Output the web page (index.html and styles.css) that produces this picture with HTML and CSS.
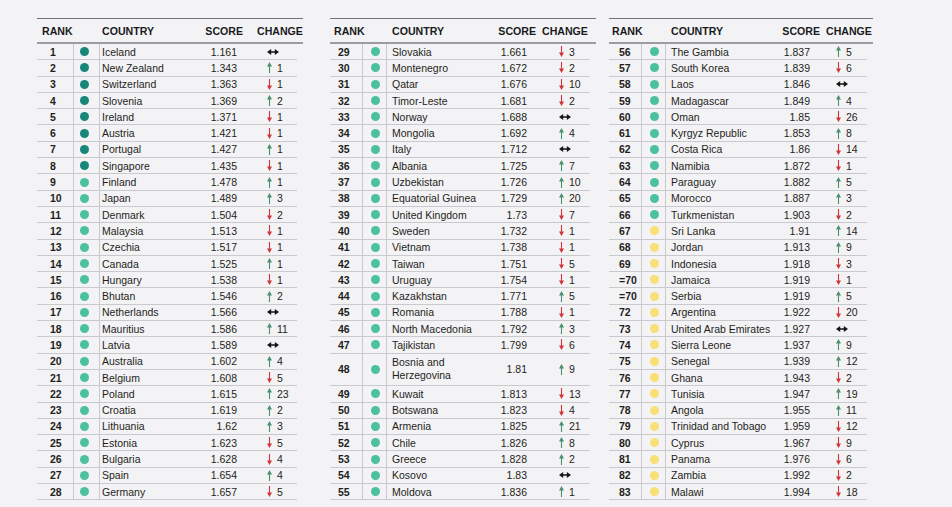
FILE: index.html
```html
<!DOCTYPE html>
<html lang="en">
<head>
<meta charset="utf-8">
<title>Global Peace Index Ranking</title>
<link rel="stylesheet" href="styles.css">
</head>
<body>
<svg class="defs" width="0" height="0" aria-hidden="true">
  <symbol id="up" viewBox="0 0 5 11"><path d="M2.5 0 L5 4.4 L3.05 4.4 L3.05 11 L1.95 11 L1.95 4.4 L0 4.4 Z" fill="#4a8f6e"/></symbol>
  <symbol id="dn" viewBox="0 0 5 11"><path d="M2.5 11 L5 6.6 L3.05 6.6 L3.05 0 L1.95 0 L1.95 6.6 L0 6.6 Z" fill="#d23539"/></symbol>
  <symbol id="eq" viewBox="0 0 12 6"><path d="M0 3 L4.2 0 L4.2 2.2 L7.8 2.2 L7.8 0 L12 3 L7.8 6 L7.8 3.8 L4.2 3.8 L4.2 6 Z" fill="#141414"/></symbol>
</svg>
<div class="page">
  <section class="panel p1">
    <div class="head"><span class="h-rank">RANK</span><span class="h-country">COUNTRY</span><span class="h-score">SCORE</span><span class="h-change">CHANGE</span></div>
    <div class="row"><span class="rank">1</span><span class="dotc"><i class="dot a"></i></span><span class="country">Iceland</span><span class="score">1.161</span><span class="chg"><svg class="eq"><use href="#eq"/></svg></span></div>
    <div class="row"><span class="rank">2</span><span class="dotc"><i class="dot a"></i></span><span class="country">New Zealand</span><span class="score">1.343</span><span class="chg"><svg class="ar"><use href="#up"/></svg>1</span></div>
    <div class="row"><span class="rank">3</span><span class="dotc"><i class="dot a"></i></span><span class="country">Switzerland</span><span class="score">1.363</span><span class="chg"><svg class="ar"><use href="#dn"/></svg>1</span></div>
    <div class="row"><span class="rank">4</span><span class="dotc"><i class="dot a"></i></span><span class="country">Slovenia</span><span class="score">1.369</span><span class="chg"><svg class="ar"><use href="#up"/></svg>2</span></div>
    <div class="row"><span class="rank">5</span><span class="dotc"><i class="dot a"></i></span><span class="country">Ireland</span><span class="score">1.371</span><span class="chg"><svg class="ar"><use href="#dn"/></svg>1</span></div>
    <div class="row"><span class="rank">6</span><span class="dotc"><i class="dot a"></i></span><span class="country">Austria</span><span class="score">1.421</span><span class="chg"><svg class="ar"><use href="#dn"/></svg>1</span></div>
    <div class="row"><span class="rank">7</span><span class="dotc"><i class="dot a"></i></span><span class="country">Portugal</span><span class="score">1.427</span><span class="chg"><svg class="ar"><use href="#up"/></svg>1</span></div>
    <div class="row"><span class="rank">8</span><span class="dotc"><i class="dot a"></i></span><span class="country">Singapore</span><span class="score">1.435</span><span class="chg"><svg class="ar"><use href="#dn"/></svg>1</span></div>
    <div class="row"><span class="rank">9</span><span class="dotc"><i class="dot b"></i></span><span class="country">Finland</span><span class="score">1.478</span><span class="chg"><svg class="ar"><use href="#up"/></svg>1</span></div>
    <div class="row"><span class="rank">10</span><span class="dotc"><i class="dot b"></i></span><span class="country">Japan</span><span class="score">1.489</span><span class="chg"><svg class="ar"><use href="#up"/></svg>3</span></div>
    <div class="row"><span class="rank">11</span><span class="dotc"><i class="dot b"></i></span><span class="country">Denmark</span><span class="score">1.504</span><span class="chg"><svg class="ar"><use href="#dn"/></svg>2</span></div>
    <div class="row"><span class="rank">12</span><span class="dotc"><i class="dot b"></i></span><span class="country">Malaysia</span><span class="score">1.513</span><span class="chg"><svg class="ar"><use href="#dn"/></svg>1</span></div>
    <div class="row"><span class="rank">13</span><span class="dotc"><i class="dot b"></i></span><span class="country">Czechia</span><span class="score">1.517</span><span class="chg"><svg class="ar"><use href="#dn"/></svg>1</span></div>
    <div class="row"><span class="rank">14</span><span class="dotc"><i class="dot b"></i></span><span class="country">Canada</span><span class="score">1.525</span><span class="chg"><svg class="ar"><use href="#up"/></svg>1</span></div>
    <div class="row"><span class="rank">15</span><span class="dotc"><i class="dot b"></i></span><span class="country">Hungary</span><span class="score">1.538</span><span class="chg"><svg class="ar"><use href="#dn"/></svg>1</span></div>
    <div class="row"><span class="rank">16</span><span class="dotc"><i class="dot b"></i></span><span class="country">Bhutan</span><span class="score">1.546</span><span class="chg"><svg class="ar"><use href="#up"/></svg>2</span></div>
    <div class="row"><span class="rank">17</span><span class="dotc"><i class="dot b"></i></span><span class="country">Netherlands</span><span class="score">1.566</span><span class="chg"><svg class="eq"><use href="#eq"/></svg></span></div>
    <div class="row"><span class="rank">18</span><span class="dotc"><i class="dot b"></i></span><span class="country">Mauritius</span><span class="score">1.586</span><span class="chg"><svg class="ar"><use href="#up"/></svg>11</span></div>
    <div class="row"><span class="rank">19</span><span class="dotc"><i class="dot b"></i></span><span class="country">Latvia</span><span class="score">1.589</span><span class="chg"><svg class="eq"><use href="#eq"/></svg></span></div>
    <div class="row"><span class="rank">20</span><span class="dotc"><i class="dot b"></i></span><span class="country">Australia</span><span class="score">1.602</span><span class="chg"><svg class="ar"><use href="#up"/></svg>4</span></div>
    <div class="row"><span class="rank">21</span><span class="dotc"><i class="dot b"></i></span><span class="country">Belgium</span><span class="score">1.608</span><span class="chg"><svg class="ar"><use href="#dn"/></svg>5</span></div>
    <div class="row"><span class="rank">22</span><span class="dotc"><i class="dot b"></i></span><span class="country">Poland</span><span class="score">1.615</span><span class="chg"><svg class="ar"><use href="#up"/></svg>23</span></div>
    <div class="row"><span class="rank">23</span><span class="dotc"><i class="dot b"></i></span><span class="country">Croatia</span><span class="score">1.619</span><span class="chg"><svg class="ar"><use href="#up"/></svg>2</span></div>
    <div class="row"><span class="rank">24</span><span class="dotc"><i class="dot b"></i></span><span class="country">Lithuania</span><span class="score">1.62</span><span class="chg"><svg class="ar"><use href="#up"/></svg>3</span></div>
    <div class="row"><span class="rank">25</span><span class="dotc"><i class="dot b"></i></span><span class="country">Estonia</span><span class="score">1.623</span><span class="chg"><svg class="ar"><use href="#dn"/></svg>5</span></div>
    <div class="row"><span class="rank">26</span><span class="dotc"><i class="dot b"></i></span><span class="country">Bulgaria</span><span class="score">1.628</span><span class="chg"><svg class="ar"><use href="#dn"/></svg>4</span></div>
    <div class="row"><span class="rank">27</span><span class="dotc"><i class="dot b"></i></span><span class="country">Spain</span><span class="score">1.654</span><span class="chg"><svg class="ar"><use href="#up"/></svg>4</span></div>
    <div class="row"><span class="rank">28</span><span class="dotc"><i class="dot b"></i></span><span class="country">Germany</span><span class="score">1.657</span><span class="chg"><svg class="ar"><use href="#dn"/></svg>5</span></div>
  </section>

  <section class="panel p2">
    <div class="head"><span class="h-rank">RANK</span><span class="h-country">COUNTRY</span><span class="h-score">SCORE</span><span class="h-change">CHANGE</span></div>
    <div class="row"><span class="rank">29</span><span class="dotc"><i class="dot b"></i></span><span class="country">Slovakia</span><span class="score">1.661</span><span class="chg"><svg class="ar"><use href="#dn"/></svg>3</span></div>
    <div class="row"><span class="rank">30</span><span class="dotc"><i class="dot b"></i></span><span class="country">Montenegro</span><span class="score">1.672</span><span class="chg"><svg class="ar"><use href="#dn"/></svg>2</span></div>
    <div class="row"><span class="rank">31</span><span class="dotc"><i class="dot b"></i></span><span class="country">Qatar</span><span class="score">1.676</span><span class="chg"><svg class="ar"><use href="#dn"/></svg>10</span></div>
    <div class="row"><span class="rank">32</span><span class="dotc"><i class="dot b"></i></span><span class="country">Timor-Leste</span><span class="score">1.681</span><span class="chg"><svg class="ar"><use href="#dn"/></svg>2</span></div>
    <div class="row"><span class="rank">33</span><span class="dotc"><i class="dot b"></i></span><span class="country">Norway</span><span class="score">1.688</span><span class="chg"><svg class="eq"><use href="#eq"/></svg></span></div>
    <div class="row"><span class="rank">34</span><span class="dotc"><i class="dot b"></i></span><span class="country">Mongolia</span><span class="score">1.692</span><span class="chg"><svg class="ar"><use href="#up"/></svg>4</span></div>
    <div class="row"><span class="rank">35</span><span class="dotc"><i class="dot b"></i></span><span class="country">Italy</span><span class="score">1.712</span><span class="chg"><svg class="eq"><use href="#eq"/></svg></span></div>
    <div class="row"><span class="rank">36</span><span class="dotc"><i class="dot b"></i></span><span class="country">Albania</span><span class="score">1.725</span><span class="chg"><svg class="ar"><use href="#up"/></svg>7</span></div>
    <div class="row"><span class="rank">37</span><span class="dotc"><i class="dot b"></i></span><span class="country">Uzbekistan</span><span class="score">1.726</span><span class="chg"><svg class="ar"><use href="#up"/></svg>10</span></div>
    <div class="row"><span class="rank">38</span><span class="dotc"><i class="dot b"></i></span><span class="country">Equatorial Guinea</span><span class="score">1.729</span><span class="chg"><svg class="ar"><use href="#up"/></svg>20</span></div>
    <div class="row"><span class="rank">39</span><span class="dotc"><i class="dot b"></i></span><span class="country">United Kingdom</span><span class="score">1.73</span><span class="chg"><svg class="ar"><use href="#dn"/></svg>7</span></div>
    <div class="row"><span class="rank">40</span><span class="dotc"><i class="dot b"></i></span><span class="country">Sweden</span><span class="score">1.732</span><span class="chg"><svg class="ar"><use href="#dn"/></svg>1</span></div>
    <div class="row"><span class="rank">41</span><span class="dotc"><i class="dot b"></i></span><span class="country">Vietnam</span><span class="score">1.738</span><span class="chg"><svg class="ar"><use href="#dn"/></svg>1</span></div>
    <div class="row"><span class="rank">42</span><span class="dotc"><i class="dot b"></i></span><span class="country">Taiwan</span><span class="score">1.751</span><span class="chg"><svg class="ar"><use href="#dn"/></svg>5</span></div>
    <div class="row"><span class="rank">43</span><span class="dotc"><i class="dot b"></i></span><span class="country">Uruguay</span><span class="score">1.754</span><span class="chg"><svg class="ar"><use href="#dn"/></svg>1</span></div>
    <div class="row"><span class="rank">44</span><span class="dotc"><i class="dot b"></i></span><span class="country">Kazakhstan</span><span class="score">1.771</span><span class="chg"><svg class="ar"><use href="#up"/></svg>5</span></div>
    <div class="row"><span class="rank">45</span><span class="dotc"><i class="dot b"></i></span><span class="country">Romania</span><span class="score">1.788</span><span class="chg"><svg class="ar"><use href="#dn"/></svg>1</span></div>
    <div class="row"><span class="rank">46</span><span class="dotc"><i class="dot b"></i></span><span class="country">North Macedonia</span><span class="score">1.792</span><span class="chg"><svg class="ar"><use href="#up"/></svg>3</span></div>
    <div class="row"><span class="rank">47</span><span class="dotc"><i class="dot b"></i></span><span class="country">Tajikistan</span><span class="score">1.799</span><span class="chg"><svg class="ar"><use href="#dn"/></svg>6</span></div>
    <div class="row tall"><span class="rank">48</span><span class="dotc"><i class="dot b"></i></span><span class="country">Bosnia and<br>Herzegovina</span><span class="score">1.81</span><span class="chg"><svg class="ar"><use href="#up"/></svg>9</span></div>
    <div class="row"><span class="rank">49</span><span class="dotc"><i class="dot b"></i></span><span class="country">Kuwait</span><span class="score">1.813</span><span class="chg"><svg class="ar"><use href="#dn"/></svg>13</span></div>
    <div class="row"><span class="rank">50</span><span class="dotc"><i class="dot b"></i></span><span class="country">Botswana</span><span class="score">1.823</span><span class="chg"><svg class="ar"><use href="#dn"/></svg>4</span></div>
    <div class="row"><span class="rank">51</span><span class="dotc"><i class="dot b"></i></span><span class="country">Armenia</span><span class="score">1.825</span><span class="chg"><svg class="ar"><use href="#up"/></svg>21</span></div>
    <div class="row"><span class="rank">52</span><span class="dotc"><i class="dot b"></i></span><span class="country">Chile</span><span class="score">1.826</span><span class="chg"><svg class="ar"><use href="#up"/></svg>8</span></div>
    <div class="row"><span class="rank">53</span><span class="dotc"><i class="dot b"></i></span><span class="country">Greece</span><span class="score">1.828</span><span class="chg"><svg class="ar"><use href="#up"/></svg>2</span></div>
    <div class="row"><span class="rank">54</span><span class="dotc"><i class="dot b"></i></span><span class="country">Kosovo</span><span class="score">1.83</span><span class="chg"><svg class="eq"><use href="#eq"/></svg></span></div>
    <div class="row"><span class="rank">55</span><span class="dotc"><i class="dot b"></i></span><span class="country">Moldova</span><span class="score">1.836</span><span class="chg"><svg class="ar"><use href="#up"/></svg>1</span></div>
  </section>

  <section class="panel p3">
    <div class="head"><span class="h-rank">RANK</span><span class="h-country">COUNTRY</span><span class="h-score">SCORE</span><span class="h-change">CHANGE</span></div>
    <div class="row"><span class="rank">56</span><span class="dotc"><i class="dot b"></i></span><span class="country">The Gambia</span><span class="score">1.837</span><span class="chg"><svg class="ar"><use href="#up"/></svg>5</span></div>
    <div class="row"><span class="rank">57</span><span class="dotc"><i class="dot b"></i></span><span class="country">South Korea</span><span class="score">1.839</span><span class="chg"><svg class="ar"><use href="#dn"/></svg>6</span></div>
    <div class="row"><span class="rank">58</span><span class="dotc"><i class="dot b"></i></span><span class="country">Laos</span><span class="score">1.846</span><span class="chg"><svg class="eq"><use href="#eq"/></svg></span></div>
    <div class="row"><span class="rank">59</span><span class="dotc"><i class="dot b"></i></span><span class="country">Madagascar</span><span class="score">1.849</span><span class="chg"><svg class="ar"><use href="#up"/></svg>4</span></div>
    <div class="row"><span class="rank">60</span><span class="dotc"><i class="dot b"></i></span><span class="country">Oman</span><span class="score">1.85</span><span class="chg"><svg class="ar"><use href="#dn"/></svg>26</span></div>
    <div class="row"><span class="rank">61</span><span class="dotc"><i class="dot b"></i></span><span class="country">Kyrgyz Republic</span><span class="score">1.853</span><span class="chg"><svg class="ar"><use href="#up"/></svg>8</span></div>
    <div class="row"><span class="rank">62</span><span class="dotc"><i class="dot b"></i></span><span class="country">Costa Rica</span><span class="score">1.86</span><span class="chg"><svg class="ar"><use href="#dn"/></svg>14</span></div>
    <div class="row"><span class="rank">63</span><span class="dotc"><i class="dot b"></i></span><span class="country">Namibia</span><span class="score">1.872</span><span class="chg"><svg class="ar"><use href="#dn"/></svg>1</span></div>
    <div class="row"><span class="rank">64</span><span class="dotc"><i class="dot b"></i></span><span class="country">Paraguay</span><span class="score">1.882</span><span class="chg"><svg class="ar"><use href="#up"/></svg>5</span></div>
    <div class="row"><span class="rank">65</span><span class="dotc"><i class="dot b"></i></span><span class="country">Morocco</span><span class="score">1.887</span><span class="chg"><svg class="ar"><use href="#up"/></svg>3</span></div>
    <div class="row"><span class="rank">66</span><span class="dotc"><i class="dot b"></i></span><span class="country">Turkmenistan</span><span class="score">1.903</span><span class="chg"><svg class="ar"><use href="#dn"/></svg>2</span></div>
    <div class="row"><span class="rank">67</span><span class="dotc"><i class="dot c"></i></span><span class="country">Sri Lanka</span><span class="score">1.91</span><span class="chg"><svg class="ar"><use href="#up"/></svg>14</span></div>
    <div class="row"><span class="rank">68</span><span class="dotc"><i class="dot c"></i></span><span class="country">Jordan</span><span class="score">1.913</span><span class="chg"><svg class="ar"><use href="#up"/></svg>9</span></div>
    <div class="row"><span class="rank">69</span><span class="dotc"><i class="dot c"></i></span><span class="country">Indonesia</span><span class="score">1.918</span><span class="chg"><svg class="ar"><use href="#dn"/></svg>3</span></div>
    <div class="row"><span class="rank">=70</span><span class="dotc"><i class="dot c"></i></span><span class="country">Jamaica</span><span class="score">1.919</span><span class="chg"><svg class="ar"><use href="#dn"/></svg>1</span></div>
    <div class="row"><span class="rank">=70</span><span class="dotc"><i class="dot c"></i></span><span class="country">Serbia</span><span class="score">1.919</span><span class="chg"><svg class="ar"><use href="#up"/></svg>5</span></div>
    <div class="row"><span class="rank">72</span><span class="dotc"><i class="dot c"></i></span><span class="country">Argentina</span><span class="score">1.922</span><span class="chg"><svg class="ar"><use href="#dn"/></svg>20</span></div>
    <div class="row"><span class="rank">73</span><span class="dotc"><i class="dot c"></i></span><span class="country">United Arab Emirates</span><span class="score">1.927</span><span class="chg"><svg class="eq"><use href="#eq"/></svg></span></div>
    <div class="row"><span class="rank">74</span><span class="dotc"><i class="dot c"></i></span><span class="country">Sierra Leone</span><span class="score">1.937</span><span class="chg"><svg class="ar"><use href="#up"/></svg>9</span></div>
    <div class="row"><span class="rank">75</span><span class="dotc"><i class="dot c"></i></span><span class="country">Senegal</span><span class="score">1.939</span><span class="chg"><svg class="ar"><use href="#up"/></svg>12</span></div>
    <div class="row"><span class="rank">76</span><span class="dotc"><i class="dot c"></i></span><span class="country">Ghana</span><span class="score">1.943</span><span class="chg"><svg class="ar"><use href="#dn"/></svg>2</span></div>
    <div class="row"><span class="rank">77</span><span class="dotc"><i class="dot c"></i></span><span class="country">Tunisia</span><span class="score">1.947</span><span class="chg"><svg class="ar"><use href="#up"/></svg>19</span></div>
    <div class="row"><span class="rank">78</span><span class="dotc"><i class="dot c"></i></span><span class="country">Angola</span><span class="score">1.955</span><span class="chg"><svg class="ar"><use href="#up"/></svg>11</span></div>
    <div class="row"><span class="rank">79</span><span class="dotc"><i class="dot c"></i></span><span class="country">Trinidad and Tobago</span><span class="score">1.959</span><span class="chg"><svg class="ar"><use href="#dn"/></svg>12</span></div>
    <div class="row"><span class="rank">80</span><span class="dotc"><i class="dot c"></i></span><span class="country">Cyprus</span><span class="score">1.967</span><span class="chg"><svg class="ar"><use href="#dn"/></svg>9</span></div>
    <div class="row"><span class="rank">81</span><span class="dotc"><i class="dot c"></i></span><span class="country">Panama</span><span class="score">1.976</span><span class="chg"><svg class="ar"><use href="#dn"/></svg>6</span></div>
    <div class="row"><span class="rank">82</span><span class="dotc"><i class="dot c"></i></span><span class="country">Zambia</span><span class="score">1.992</span><span class="chg"><svg class="ar"><use href="#dn"/></svg>2</span></div>
    <div class="row"><span class="rank">83</span><span class="dotc"><i class="dot c"></i></span><span class="country">Malawi</span><span class="score">1.994</span><span class="chg"><svg class="ar"><use href="#dn"/></svg>18</span></div>
  </section>
</div>
</body>
</html>
```

FILE: styles.css
```css
html, body {
  margin: 0;
  padding: 0;
  background: #f3f3f5;
}

body {
  font-family: "Liberation Sans", Arial, sans-serif;
  color: #1e1e20;
  font-size: 10.5px;
}

.defs {
  display: block;
  width: 0;
  height: 0;
  overflow: hidden;
}

.page {
  display: flex;
  align-items: flex-start;
  padding: 18px 0 0 37px;
}

.panel {
  width: 266px;
  --rk: 37px;
  --dt: 26px;
  --ct: 97px;
  --rp: 13px;
  --dp: 6px;
  --cp: 2px;
  --chp: 30px;
  --hr: 5px;
  --hs: -6px;
  --hc: 20px;
}

.p2 {
  margin-left: 27px;
  --rk: 33px;
  --dt: 24px;
  --ct: 100px;
  --rp: 8px;
  --dp: 7.5px;
  --cp: 5px;
  --chp: 32px;
  --hr: 4px;
  --hs: -9px;
  --hc: 15px;
}

.p3 {
  margin-left: 13px;
  width: 264px;
  --rk: 33px;
  --dt: 24px;
  --ct: 104px;
  --rp: 10px;
  --dp: 7.5px;
  --cp: 5px;
  --chp: 26px;
  --hr: 3px;
  --hs: -10px;
  --hc: 16px;
}

.head,
.row {
  display: grid;
  grid-template-columns: var(--rk) var(--dt) var(--ct) 40px 1fr;
  align-items: center;
}

.head {
  height: 23px;
  border-top: 1px solid #747478;
  border-bottom: 2px solid #9c9ca0;
  font-weight: 700;
  font-size: 10.6px;
  color: #1a1a1c;
  white-space: nowrap;
}

.h-rank {
  grid-column: 1 / 3;
  padding-left: var(--hr);
}

.h-country {
  padding-left: var(--cp);
}

.h-score {
  justify-self: end;
  margin-right: var(--hs);
}

.h-change {
  padding-left: var(--hc);
}

.row {
  box-sizing: border-box;
  height: 16.3px;
  margin-right: 6px;
  border-bottom: 1px solid #cacace;
  line-height: 12px;
}

.row.tall {
  height: 32.6px;
  line-height: 13.3px;
}

.rank,
.dotc {
  align-self: stretch;
  display: flex;
  align-items: center;
  border-right: 1px solid #cacace;
}

.rank {
  font-weight: 700;
  padding-left: var(--rp);
  white-space: nowrap;
}

.dotc {
  padding-left: var(--dp);
}

.dot {
  display: block;
  width: 9px;
  height: 9px;
  border-radius: 50%;
}

.dot.a { background: #17877a; }
.dot.b { background: #4cc19d; }
.dot.c { background: #f8df76; }

.country {
  padding-left: var(--cp);
  white-space: nowrap;
}

.score {
  text-align: right;
}

.chg {
  display: flex;
  align-items: center;
  gap: 5px;
  padding-left: var(--chp);
}

.ar {
  width: 5px;
  height: 11px;
  flex: none;
}

.eq {
  width: 12px;
  height: 6px;
  flex: none;
}
```
